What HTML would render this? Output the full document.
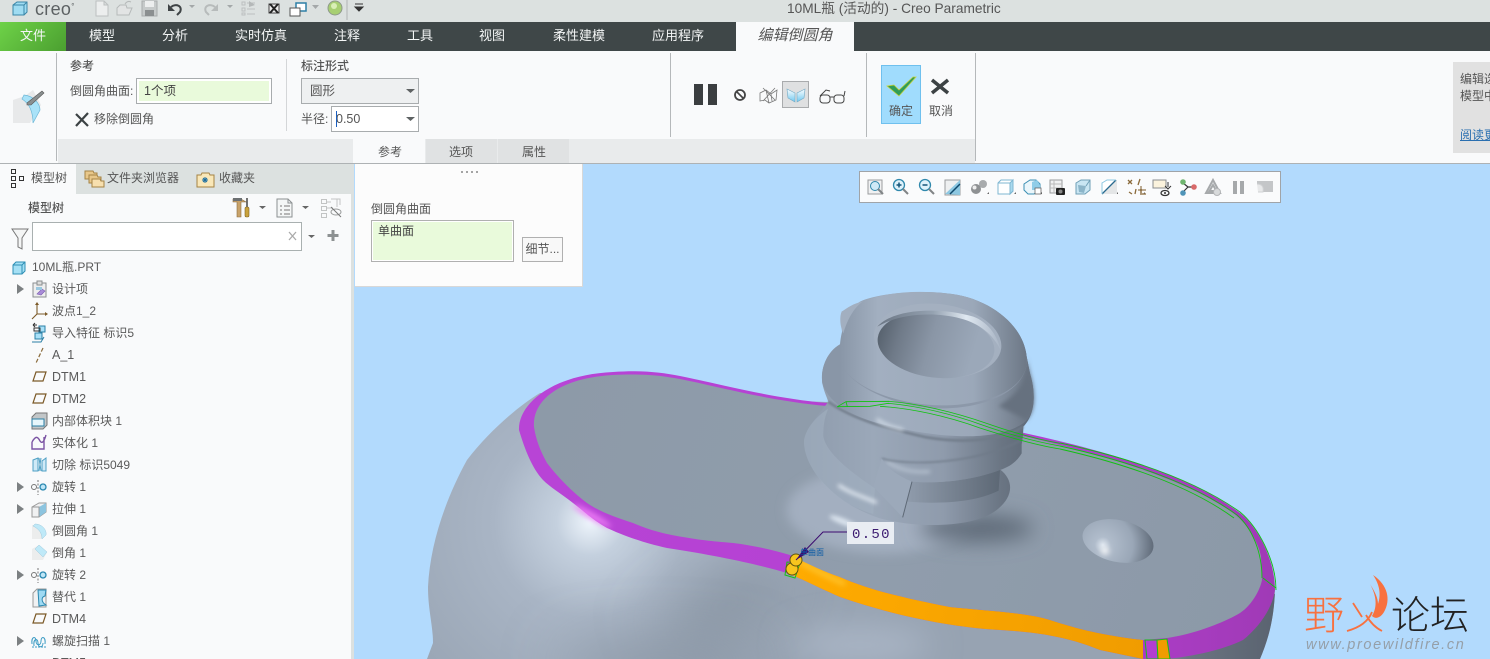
<!DOCTYPE html>
<html><head><meta charset="utf-8"><title>10ML瓶 (活动的) - Creo Parametric</title>
<style>
html,body{margin:0;padding:0;width:1490px;height:659px;overflow:hidden;background:#b2dafd}
body{position:relative;font-family:"Liberation Sans","Noto Sans CJK SC",sans-serif;font-size:12px;color:#555}
.a{position:absolute}
.t{position:absolute;white-space:nowrap;line-height:16px}
.tab{position:absolute;top:22px;height:29px;line-height:28px;color:#f4f6f6;font-size:13px;text-align:center;transform:translateX(-50%);white-space:nowrap}
.row{position:absolute;left:52px;white-space:nowrap;line-height:16px;font-size:12px;color:#5a5a5a;margin-top:1px}
.row.d{font-size:12.5px}
</style></head><body>

<!-- 3D viewport -->
<svg class="a" style="left:0;top:0" width="1490" height="659" viewBox="0 0 1490 659">
<defs>
<radialGradient id="bodyG" gradientUnits="userSpaceOnUse" cx="590" cy="522" r="240">
<stop offset="0" stop-color="#eef5fc"/><stop offset=".14" stop-color="#c4d0de"/><stop offset=".4" stop-color="#a9b5c5"/><stop offset="1" stop-color="#97a3b2"/>
</radialGradient>
<linearGradient id="rightDark" gradientUnits="userSpaceOnUse" x1="1130" y1="0" x2="1275" y2="0">
<stop offset="0" stop-color="#95a1b0"/><stop offset=".4" stop-color="#6a7481"/><stop offset="1" stop-color="#5a6370"/>
</linearGradient>
<linearGradient id="purp" gradientUnits="userSpaceOnUse" x1="520" y1="0" x2="1275" y2="0">
<stop offset="0" stop-color="#b844d6"/><stop offset=".7" stop-color="#b23fd0"/><stop offset="1" stop-color="#a03ab6"/>
</linearGradient>
<linearGradient id="or" gradientUnits="userSpaceOnUse" x1="800" y1="560" x2="1150" y2="650">
<stop offset="0" stop-color="#ffab00"/><stop offset="1" stop-color="#f09c00"/>
</linearGradient>
<linearGradient id="top" gradientUnits="userSpaceOnUse" x1="540" y1="400" x2="1250" y2="620">
<stop offset="0" stop-color="#8d9aa8"/><stop offset=".5" stop-color="#909dac"/><stop offset="1" stop-color="#8c99a8"/>
</linearGradient>
<linearGradient id="neck" gradientUnits="userSpaceOnUse" x1="130" y1="0" x2="830" y2="0">
<stop offset="0" stop-color="#8e9bac"/><stop offset=".3" stop-color="#9ba8b9"/><stop offset=".6" stop-color="#8f9bac"/><stop offset=".85" stop-color="#6a7583"/><stop offset="1" stop-color="#5c6775"/>
</linearGradient>
<linearGradient id="cap" gradientUnits="userSpaceOnUse" x1="240" y1="0" x2="810" y2="0">
<stop offset="0" stop-color="#8996a7"/><stop offset=".2" stop-color="#a2afc0"/><stop offset=".7" stop-color="#9ba8b9"/><stop offset="1" stop-color="#6a7583"/>
</linearGradient>
<linearGradient id="hole" gradientUnits="userSpaceOnUse" x1="350" y1="170" x2="640" y2="220">
<stop offset="0" stop-color="#56616d"/><stop offset=".22" stop-color="#6f7a88"/><stop offset=".55" stop-color="#8a96a6"/><stop offset="1" stop-color="#9ba8b9"/>
</linearGradient>
<linearGradient id="wall" gradientUnits="userSpaceOnUse" x1="352" y1="0" x2="722" y2="0">
<stop offset="0" stop-color="#6a7583"/><stop offset=".45" stop-color="#95a2b1"/><stop offset=".72" stop-color="#dfe8f1"/><stop offset="1" stop-color="#a8b4c4"/>
</linearGradient>
<linearGradient id="rec" gradientUnits="userSpaceOnUse" x1="450" y1="0" x2="730" y2="0">
<stop offset="0" stop-color="#8e9aaa"/><stop offset="1" stop-color="#5b6673"/>
</linearGradient>
<radialGradient id="bumpG" gradientUnits="userSpaceOnUse" cx="1104" cy="548" r="50">
<stop offset="0" stop-color="#dfe7f0"/><stop offset=".16" stop-color="#b0bccb"/><stop offset=".6" stop-color="#9aa7b7"/><stop offset="1" stop-color="#626d7b"/>
</radialGradient>
<filter id="b3" filterUnits="userSpaceOnUse" x="-2000" y="-2000" width="8000" height="8000"><feGaussianBlur stdDeviation="3"/></filter>
<filter id="b6" filterUnits="userSpaceOnUse" x="-2000" y="-2000" width="8000" height="8000"><feGaussianBlur stdDeviation="6"/></filter>
<filter id="b8" filterUnits="userSpaceOnUse" x="-2000" y="-2000" width="8000" height="8000"><feGaussianBlur stdDeviation="8"/></filter>
<filter id="b16" filterUnits="userSpaceOnUse" x="-2000" y="-2000" width="8000" height="8000"><feGaussianBlur stdDeviation="16"/></filter>
<filter id="b30" filterUnits="userSpaceOnUse" x="-2000" y="-2000" width="8000" height="8000"><feGaussianBlur stdDeviation="30"/></filter>
<clipPath id="bodyClip"><path d="M540,393 C520,405 490,430 467,460 C445,500 430,545 428,587 C428,610 433,625 433,643 L427,659 L1260,659 C1268,640 1274,620 1275,590 L1253,533 L827,402Z"/></clipPath>
</defs>
<rect width="1490" height="659" fill="#b2dafd"/>

<!-- body -->
<path d="M540,393 C520,405 490,430 467,460 C445,500 430,545 428,587 C428,610 433,625 433,643 L427,659 L1260,659 C1268,640 1274,620 1275,590 L1253,533 L827,402Z" fill="url(#bodyG)"/>
<g clip-path="url(#bodyClip)">
<ellipse cx="725" cy="605" rx="70" ry="22" fill="#808c9a" filter="url(#b30)" transform="rotate(-25 725 605)"/>
<ellipse cx="660" cy="665" rx="100" ry="18" fill="#828e9c" filter="url(#b30)"/>
<ellipse cx="860" cy="645" rx="70" ry="18" fill="#aab6c6" filter="url(#b16)"/>
<path d="M1130,630 L1290,590 L1290,659 L1130,659Z" fill="url(#rightDark)"/>
</g>

<!-- fillet outer: purple -->
<path d="M519,430 C518,405 550,375 613,372 C640,370 660,372 680,376 C720,384 770,398 827,403 L1000,428 C1100,448 1190,475 1240,513 C1258,527 1275,560 1275,590 C1272,610 1258,628 1243,640 C1222,650 1195,656 1167,659 L1143,659 L1100,650 C1075,640 1050,633 1000,630 C960,628 900,618 840,597 C815,586 800,578 787,573 C760,565 720,556 667,548 C640,542 620,534 607,528 C590,518 585,512 573,503 C560,493 550,487 543,480 C532,468 525,450 519,430Z" fill="url(#purp)"/>
<ellipse cx="592" cy="516" rx="22" ry="3" fill="#f080f8" filter="url(#b3)" transform="rotate(30 592 516)"/>
<!-- orange -->
<path d="M793,556 C810,565 825,572 840,577 C870,590 900,597 950,607 C990,611 1030,613 1050,620 C1075,628 1100,635 1143,640 L1143,659 L1100,650 C1075,640 1050,633 1000,630 C960,628 900,618 840,597 C815,586 800,578 787,573Z" fill="url(#or)"/>
<path d="M800,562 C815,570 830,578 845,584" stroke="#ffd040" stroke-width="3" fill="none" filter="url(#b3)"/>
<!-- flat top -->
<path d="M534,427 C532,400 560,378 613,375 C650,373 668,377 680,379 C720,387 770,401 827,406 L1000,431 C1090,450 1185,478 1233,513 C1250,525 1260,548 1261,557 L1262,580 C1260,590 1252,605 1240,613 C1225,622 1195,634 1167,638 L1143,640 C1100,635 1075,628 1050,620 C1030,613 990,611 950,607 C900,597 870,590 840,577 C825,572 810,565 790,555 C770,549 750,545 733,543 C710,541 700,540 683,537 C660,533 650,530 633,523 C615,517 600,512 587,503 C575,494 560,480 547,463 C540,450 536,440 534,427Z" fill="url(#top)"/>

<!-- band pieces -->
<path d="M1145,640 L1157,640 L1158,659 L1147,659Z" fill="#b23fd0" stroke="#16c016" stroke-width="1"/>
<path d="M1157,640 L1167,639 L1170,659 L1158,659Z" fill="#f09c00" stroke="#16c016" stroke-width="1"/>

<!-- bump -->
<ellipse cx="1118" cy="541" rx="36" ry="21" transform="rotate(12 1118 541)" fill="url(#bumpG)"/>
<ellipse cx="1105" cy="551" rx="4" ry="3.500" fill="#fff" filter="url(#b3)"/>

<!-- neck -->
<g transform="translate(760,280) scale(.33333)">
<ellipse cx="370" cy="690" rx="290" ry="130" fill="#a3afc0" filter="url(#b16)"/>
<ellipse cx="650" cy="745" rx="170" ry="40" fill="#5f6a78" filter="url(#b30)"/>
<ellipse cx="250" cy="725" rx="45" ry="9" fill="#dde6f0" filter="url(#b6)" transform="rotate(22 250 725)"/>
<!-- silhouette -->
<path d="M245,95 C240,120 250,160 245,190 C205,210 180,260 187,310 C192,335 200,350 205,365 C180,400 140,440 132,480 C128,560 220,670 360,715 C470,745 640,745 710,690 C762,650 762,600 720,568 C770,545 790,510 790,440 C830,400 825,330 810,280 L800,230 C790,130 680,50 560,40 C480,30 350,40 300,65 L270,85Z" fill="url(#neck)"/>
<!-- lighter collar -->
<path d="M132,480 C128,560 220,670 340,702 L345,625 C270,575 200,520 190,470 C190,430 195,410 205,385 C170,410 140,440 132,480Z" fill="#a3b0c1" opacity=".55"/>
<!-- recess -->
<path d="M456,605 C540,612 640,600 720,570 L716,632 C640,670 530,672 440,665Z" fill="url(#rec)"/>
<!-- upper thread -->
<path d="M365,535 C450,562 650,552 785,480 L785,520 C770,545 750,560 720,570 C640,600 540,612 456,605 C420,590 385,570 365,535Z" fill="url(#neck)"/>
<path d="M380,545 C420,570 460,578 510,575" stroke="#c8d3e0" stroke-width="6" fill="none" filter="url(#b6)"/>
<path d="M365,535 C450,560 650,550 785,480" stroke="#6d7886" stroke-width="4" fill="none" filter="url(#b3)"/>
<!-- tab -->
<path d="M365,535 L340,620 L428,712 L456,605 C420,590 385,570 365,535Z" fill="#9ca9ba"/>
<path d="M456,605 L428,712" stroke="#5e6976" stroke-width="3" fill="none"/>
<path d="M235,615 C270,640 310,650 350,668" stroke="#eef4fb" stroke-width="8" fill="none" filter="url(#b6)"/>
<!-- flange -->
<path d="M205,365 C280,420 400,450 500,472 C620,492 730,480 790,440" stroke="#6f7a88" stroke-width="7" fill="none" filter="url(#b3)"/>
<path d="M245,190 C205,210 180,260 187,310 C210,380 300,420 400,440 C520,470 700,490 790,430 C830,400 825,330 810,280 L800,230Z" fill="url(#cap)"/>
<path d="M350,418 C375,436 400,442 430,450" stroke="#e4edf6" stroke-width="7" fill="none" filter="url(#b6)"/>
<!-- barrel -->
<path d="M240,240 C260,320 420,390 560,385 C700,380 810,320 800,230 L240,200Z" fill="#8c98a9"/>
<path d="M800,230 C808,290 780,340 715,378 L800,420 C830,390 825,330 810,280Z" fill="#66717f" filter="url(#b6)"/>
<path d="M345,262 C370,285 400,298 440,310" stroke="#dfe8f2" stroke-width="9" fill="none" filter="url(#b6)"/>
<path d="M240,240 C235,180 250,110 290,75 C350,40 450,28 560,40 C680,50 790,130 800,230 C810,320 700,372 560,376 C420,380 260,320 240,240Z" fill="url(#cap)"/>
<!-- lip -->
<ellipse cx="533" cy="182" rx="192" ry="110" transform="rotate(7 533 182)" fill="#a4b0c0"/>
<ellipse cx="528" cy="195" rx="176" ry="98" transform="rotate(7 528 195)" fill="url(#hole)"/>
<path d="M352,140 C400,85 540,80 640,110 C680,125 710,160 722,210 C700,165 660,130 600,115 C520,95 420,100 352,140Z" fill="url(#wall)"/>
<!-- nub -->
<path d="M245,95 C262,84 280,70 308,65 C280,85 262,120 250,160 C240,140 238,110 245,95Z" fill="#a2afc0"/>
<!-- green lines -->
<g fill="none" stroke="#0fc40f" stroke-width="2.400">
<path d="M232,380 L258,365 L385,364 C470,370 580,395 680,430 C760,458 830,478 900,490"/>
<path d="M232,380 L330,379 L385,370 C470,378 570,400 670,436 C750,464 830,486 900,498"/>
<path d="M360,379 C450,384 560,408 660,444 C740,470 830,496 900,507"/>
<path d="M258,365 L262,380"/>
</g>
</g>
<!-- green rim right -->
<g fill="none" stroke="#12c012" stroke-width=".9">
<path d="M1060,443 C1130,458 1195,480 1240,512 C1258,527 1276,560 1276,590"/>
<path d="M1060,446 C1128,461 1193,483 1237,515 C1252,528 1262,552 1262,578"/>
<path d="M1060,449 C1126,464 1190,486 1234,518"/>
<path d="M1263,578 L1276,588"/>
</g>

<!-- handles -->
<path d="M787,562 L785,575 L795,578 L800,563Z" fill="none" stroke="#16c016"/>
<circle cx="792" cy="569" r="6" fill="#f7c51e" stroke="#62560f" stroke-width="1"/>
<circle cx="796" cy="560" r="6" fill="#f7c51e" stroke="#62560f" stroke-width="1"/>
<path d="M796,560 L823,532 L847,532" fill="none" stroke="#3c0b70" stroke-width="1"/>
<path d="M796,560 L805,547 L809,552Z" fill="#3c0b70"/>
<rect x="847" y="522" width="47" height="22" fill="#e9edf3"/>
<text x="852" y="538" font-family="Liberation Mono,monospace" font-size="14" letter-spacing="1.3" fill="#3c1b70">0.50</text>
<text x="800" y="555" font-family="Noto Sans CJK SC,sans-serif" font-size="8" fill="#0a5aa5">单曲面</text>

<!-- watermark -->
<text x="1304" y="629" font-family="Noto Sans CJK SC,sans-serif" font-size="40" font-weight="300" fill="#f8713f">野</text>
<path d="M1353,603 L1362,617 M1372,612 C1368,622 1358,628 1347,631 M1366,615 C1370,622 1376,628 1382,631" stroke="#f8713f" stroke-width="1.800" fill="none"/>
<path d="M1373,575 C1388,585 1391,600 1384,612 C1381,617 1376,620 1372,616 C1378,606 1376,595 1370,584 C1375,592 1378,598 1378,604 C1381,595 1380,585 1373,575Z" fill="#f8713f"/>
<text x="1391" y="629" font-family="Noto Sans CJK SC,sans-serif" font-size="39" font-weight="300" fill="#222">论坛</text>
<text x="1306" y="649" font-family="Liberation Sans,sans-serif" font-style="italic" font-size="14.500" letter-spacing="1.650" fill="#959fa8">www.proewildfire.cn</text>
</svg>

<!-- Title bar -->
<div class="a" style="left:0;top:0;width:1490px;height:22px;background:#dce1e0"></div>
<div class="t" style="left:35px;top:-2px;font-size:18px;letter-spacing:.3px;color:#5c6163;line-height:18px">creo<span style="font-size:8px;vertical-align:6px">°</span></div>
<div class="t" style="left:787px;top:1px;font-size:13.700px;color:#555">10ML瓶 (活动的) - Creo Parametric</div>

<!-- Tab bar -->
<div class="a" style="left:0;top:22px;width:1490px;height:29px;background:#3f4748"></div>
<div class="a" style="left:0;top:22px;width:66px;height:29px;background:linear-gradient(135deg,#6ed248,#4b9f30)"></div>
<div class="tab" style="left:33px">文件</div>
<div class="tab" style="left:102px">模型</div>
<div class="tab" style="left:175px">分析</div>
<div class="tab" style="left:261px">实时仿真</div>
<div class="tab" style="left:347px">注释</div>
<div class="tab" style="left:420px">工具</div>
<div class="tab" style="left:492px">视图</div>
<div class="tab" style="left:579px">柔性建模</div>
<div class="tab" style="left:678px">应用程序</div>
<div class="a" style="left:736px;top:22px;width:118px;height:29px;background:#f9fafb"></div>
<div class="tab" style="left:795px;color:#555;font-style:italic;font-size:15px">编辑倒圆角</div>

<!-- Ribbon -->
<div class="a" style="left:0;top:51px;width:1490px;height:112px;background:#f9fafb;border-bottom:1px solid #aeb2b4"></div>
<div class="a" style="left:58px;top:139px;width:917px;height:24px;background:#e9ebec"></div>
<div class="a" style="left:353px;top:139px;width:72px;height:24px;background:#f9fafb"></div>
<div class="a" style="left:426px;top:139px;width:71px;height:24px;background:#e0e2e3"></div>
<div class="a" style="left:498px;top:139px;width:71px;height:24px;background:#e0e2e3"></div>
<div class="t" style="left:378px;top:144px">参考</div>
<div class="t" style="left:449px;top:144px">选项</div>
<div class="t" style="left:522px;top:144px">属性</div>
<div class="a" style="left:56px;top:53px;width:1px;height:108px;background:#b5b8ba"></div>
<div class="a" style="left:286px;top:59px;width:1px;height:72px;background:#d4d6d8"></div>
<div class="a" style="left:670px;top:53px;width:1px;height:84px;background:#b5b8ba"></div>
<div class="a" style="left:866px;top:53px;width:1px;height:84px;background:#b5b8ba"></div>
<div class="a" style="left:975px;top:53px;width:1px;height:108px;background:#b5b8ba"></div>

<div class="t" style="left:70px;top:58px;font-weight:500">参考</div>
<div class="t" style="left:70px;top:83px">倒圆角曲面:</div>
<div class="a" style="left:136px;top:78px;width:136px;height:26px;box-sizing:border-box;border:1px solid #a8acae;background:#fff;padding:2px"><div style="background:#e9fadb;height:20px;line-height:20px;padding-left:5px;color:#444;font-size:12.500px">1个项</div></div>
<div class="t" style="left:94px;top:111px">移除倒圆角</div>
<div class="t" style="left:301px;top:58px;font-weight:500">标注形式</div>
<div class="a" style="left:301px;top:78px;width:118px;height:26px;box-sizing:border-box;border:1px solid #a8acae;background:#eef0f1;line-height:24px;padding-left:8px;font-size:12.500px">圆形</div>
<div class="t" style="left:301px;top:111px">半径:</div>
<div class="a" style="left:331px;top:106px;width:88px;height:26px;box-sizing:border-box;border:1px solid #a8acae;background:#fff;line-height:24px;padding-left:4px;font-size:12.500px">0.50</div>
<div class="a" style="left:336px;top:111px;width:1px;height:16px;background:#1a5fc0"></div>
<div class="a" style="left:782px;top:81px;width:27px;height:27px;box-sizing:border-box;background:#dfe0e1;border:1px solid #a9abad"></div>
<div class="a" style="left:881px;top:65px;width:40px;height:59px;box-sizing:border-box;background:#a0dcfd;border:1px solid #6fc0ee"></div>
<div class="t" style="left:889px;top:103px">确定</div>
<div class="t" style="left:929px;top:103px">取消</div>

<div class="a" style="left:1453px;top:62px;width:37px;height:91px;background:#e1e1e1"></div>
<div class="t" style="left:1460px;top:71px;width:30px;overflow:hidden">编辑选</div>
<div class="t" style="left:1460px;top:88px;width:30px;overflow:hidden">模型中</div>
<div class="t" style="left:1460px;top:127px;width:30px;overflow:hidden;color:#2a6fb0;text-decoration:underline">阅读更</div>

<!-- Left panel -->
<div class="a" style="left:0;top:164px;width:351px;height:495px;background:#f9fafb"></div>
<div class="a" style="left:351px;top:164px;width:3px;height:495px;background:#dce1e0"></div>
<div class="a" style="left:76px;top:164px;width:275px;height:30px;background:#dce1e0"></div>
<div class="t" style="left:31px;top:170px">模型树</div>
<div class="t" style="left:107px;top:170px">文件夹浏览器</div>
<div class="t" style="left:219px;top:170px">收藏夹</div>
<div class="t" style="left:28px;top:200px;font-weight:500">模型树</div>
<div class="a" style="left:32px;top:222px;width:270px;height:29px;box-sizing:border-box;border:1px solid #a9b0b0;background:#fff"></div>
<div class="row" style="left:32px;top:258px">10ML瓶.PRT</div>
<div class="row" style="top:280px">设计项</div>
<div class="row" style="top:302px">波点1_2</div>
<div class="row" style="top:324px">导入特征 标识5</div>
<div class="row d" style="top:346px">A_1</div>
<div class="row d" style="top:368px">DTM1</div>
<div class="row d" style="top:390px">DTM2</div>
<div class="row" style="top:412px">内部体积块 1</div>
<div class="row" style="top:434px">实体化 1</div>
<div class="row" style="top:456px">切除 标识5049</div>
<div class="row" style="top:478px">旋转 1</div>
<div class="row" style="top:500px">拉伸 1</div>
<div class="row" style="top:522px">倒圆角 1</div>
<div class="row" style="top:544px">倒角 1</div>
<div class="row" style="top:566px">旋转 2</div>
<div class="row" style="top:588px">替代 1</div>
<div class="row d" style="top:610px">DTM4</div>
<div class="row" style="top:632px">螺旋扫描 1</div>
<div class="row d" style="top:654px">DTM5</div>

<!-- Popup -->
<div class="a" style="left:355px;top:164px;width:227px;height:122px;background:#fcfcfc;border-right:1px solid #d8d8d8;border-bottom:1px solid #d8d8d8"></div>
<div class="t" style="left:371px;top:201px">倒圆角曲面</div>
<div class="a" style="left:371px;top:220px;width:143px;height:42px;box-sizing:border-box;background:#e9fadb;border:1px solid #b0b0b0;box-shadow:inset 0 0 0 1px #fff;padding:2px 6px;line-height:17px;color:#444">单曲面</div>
<div class="a" style="left:522px;top:237px;width:41px;height:25px;box-sizing:border-box;background:#f8f8f8;border:1px solid #b0b0b0;line-height:23px;text-align:center;white-space:nowrap;overflow:hidden">细节...</div>

<!-- View toolbar -->
<div class="a" style="left:859px;top:171px;width:422px;height:32px;box-sizing:border-box;background:#fafbfc;border:1px solid #a0a4a8"></div>

<!-- Icons overlay -->
<svg class="a" style="left:0;top:0" width="1490" height="659" viewBox="0 0 1490 659" fill="none">
<defs><linearGradient id="mir2" x1="0" y1="0" x2="0" y2="1"><stop offset="0" stop-color="#ffffff"/><stop offset="1" stop-color="#6fc8f0"/></linearGradient></defs>
<!-- top logo cube -->
<path d="M13,5 L17,2 L27,2 L27,12 L24,15 L13,15Z" fill="#9fdcf2" stroke="#3a86a8"/><path d="M13,5 L24,5 L24,15 M24,5 L27,2" stroke="#3a86a8"/>
<!-- new/open/save -->
<path d="M96,1 L104,1 L108,5 L108,16 L96,16Z M104,1 L104,5 L108,5" fill="#eceeee" stroke="#bcc0c0"/>
<path d="M117,8 L120,5 L126,5 L127,8 L132,8 L129,15 L117,15Z" fill="#e2e4e4" stroke="#b6baba"/><path d="M125,4 C127,1 129,1 131,2" stroke="#b6baba"/>
<rect x="142" y="1" width="15" height="15" fill="#c6caca" stroke="#a8acac"/><rect x="145" y="1" width="9" height="6" fill="#eceeee"/><rect x="145" y="10" width="9" height="6" fill="#8b8f90"/>
<!-- undo/redo -->
<path d="M168,4 L168,11 L175,11 Z" fill="#3f4446"/><path d="M171,7 C176,3 183,6 180,12 L177,15" stroke="#3f4446" stroke-width="2"/>
<path d="M189,5 L195,5 L192,8Z M227,5 L233,5 L230,8Z M312,5 L319,5 L315.500,9Z" fill="#a4a8a9"/>
<path d="M218,4 L218,11 L211,11 Z" fill="#b7bbbb"/><path d="M215,7 C210,3 203,6 206,12 L209,15" stroke="#b7bbbb" stroke-width="2"/>
<path d="M242,2 h3 v3 h-3z M242,8 h3 v3 h-3z M242,13 h3 v2 h-3z M247,3 h8 M247,9 h8 M247,14 h8" stroke="#bcc0c0"/><path d="M249,1 L255,5 L249,7Z" fill="#b4b8b8"/>
<path d="M269,4 H279 V13 H269Z" stroke="#444" fill="#eee"/><path d="M270,4 L278,13 M278,4 L270,13" stroke="#222" stroke-width="2"/>
<rect x="296" y="3" width="10" height="8" fill="#fff" stroke="#2d7fa6" stroke-width="1.500"/><rect x="290" y="8" width="10" height="8" fill="#fff" stroke="#555" stroke-width="1"/>
<circle cx="335" cy="8" r="7" fill="#a7cf72" stroke="#8e9a8a"/><circle cx="334" cy="6" r="3" fill="#d9efb6"/>
<path d="M347,0 V20" stroke="#b0b4b4"/>
<path d="M355,4 H363 M355,7 H363 L359,11Z" stroke="#333" fill="#333"/>

<!-- ribbon fillet icon -->
<path d="M13,105 L13,100 L25,96 L33,90 L41,105 L30,123 L13,123Z" fill="#e8e9ea"/>
<path d="M24,95 C34,96 40,104 40,110 L33,123 C33,113 30,104 22,99Z" fill="#a9e2f8" stroke="#6db7d6" stroke-width=".7"/>
<path d="M27,103 L42,91 L44,93 L31,105 L27,105Z" fill="#8a8f90" stroke="#555" stroke-width=".6"/>
<path d="M76,114 L88,126 M88,113 L76,126" stroke="#3c4244" stroke-width="2.200"/>
<path d="M406,89 H415 L410.500,93Z M406,117 H415 L410.500,121Z" fill="#5e6263"/>
<!-- pause etc -->
<rect x="694" y="84" width="9" height="21" fill="#3b3e40"/><rect x="708" y="84" width="9" height="21" fill="#3b3e40"/>
<circle cx="740" cy="95" r="5" stroke="#444" stroke-width="1.800"/><path d="M736.500,91.500 L743.500,98.500" stroke="#444" stroke-width="1.600"/>
<path d="M760,93 L766,90 L771,94 L777,90 L776,100 L769,103 L765,100 L760,101Z M766,90 L769,103 M771,94 L772,101 M763,88 L775,100 M775,88 L763,101" stroke="#777" stroke-width=".8"/>
<path d="M787,89 L795,93 L795,102 L788,98Z M797,93 L805,89 L804,98 L797,102Z" fill="url(#mir2)" stroke="#6fa8c4" stroke-width=".6"/>
<rect x="820" y="95" width="10" height="8" rx="3" stroke="#444" stroke-width="1"/><rect x="834" y="95" width="10" height="8" rx="3" stroke="#444" stroke-width="1"/><path d="M830,97 H834 M820,96 L826,90 L830,91 M844,96 L845,91" stroke="#444"/>
<!-- check / cancel -->
<path d="M887,86 L894,85 L899,90 L913,77 L916,77 L899,96Z" fill="#2f9c59" stroke="#c8d23a" stroke-width=".8"/>
<path d="M932,80 L948,93 M948,80 L932,93" stroke="#3c4244" stroke-width="3.500"/>
<!-- popup dots -->
<path d="M461,172 h2 M466,172 h2 M471,172 h2 M476,172 h2" stroke="#a4a4a4" stroke-width="2"/>
<!-- left tabs -->
<rect x="11.500" y="169.500" width="4" height="4" stroke="#333"/><rect x="11.500" y="176.500" width="4" height="4" stroke="#333"/><rect x="11.500" y="183.500" width="4" height="4" stroke="#333"/><rect x="19.500" y="176.500" width="4" height="4" stroke="#333"/>
<g fill="#e8c78a" stroke="#a58345"><path d="M85,171 h8 l1,2 h3 v6 h-12Z"/><path d="M89,175 h8 l1,2 h3 v6 h-12Z"/><path d="M92,179 h8 l1,2 h3 v6 h-12Z" fill="#f7dfae"/></g>
<path d="M197,175 h4 l1,-2 h7 l1,2 h4 v12 h-17Z" fill="#f9e7b8" stroke="#a58345"/><path d="M205,177 v6 M202,180 h6 M203,178 l4,4 M207,178 l-4,4" stroke="#1c6da0"/>
<!-- tree toolbar -->
<path d="M233,199 H241 L246,202 H241 V217 H237 V202 H233Z" fill="#c9a36a" stroke="#8b6d3f" stroke-width=".6"/><rect x="233" y="198" width="9" height="3" fill="#6c7072"/>
<path d="M247,198 V207" stroke="#444" stroke-width="1.500"/><rect x="245" y="207" width="4" height="10" rx="1.500" fill="#c9a23c" stroke="#806321" stroke-width=".6"/>
<path d="M259,206 H266 L262.500,209Z M302,206 H309 L305.500,209Z M308,235 H315 L311.500,238Z" fill="#666"/>
<path d="M277,199 H288 L292,203 V217 H277Z M288,199 V203 H292" fill="#f4f6f6" stroke="#8c9092"/><path d="M280,206 h2 M284,206 h6 M280,210 h2 M284,210 h6 M280,214 h2 M284,214 h6" stroke="#777"/>
<g stroke="#c2c4c4"><rect x="321.500" y="199.500" width="5" height="4"/><rect x="321.500" y="206.500" width="5" height="4"/><rect x="321.500" y="213.500" width="5" height="4"/><path d="M327,202 h4 M327,208 h6 M331,199 h6 v8 M334,199 h6 v6"/></g>
<ellipse cx="336" cy="212" rx="5" ry="3" stroke="#9a9c9c"/><path d="M331,207 L341,217" stroke="#777"/>
<!-- filter -->
<path d="M12,229 H28 L22,238 V249 L18,247 V238Z" stroke="#777" fill="#f4f5f5"/>
<path d="M289,232 L296,240 M296,232 L289,240" stroke="#aaa" stroke-width="1.300"/>
<path d="M333,230 V241 M327.500,235.500 H338.500" stroke="#8d9192" stroke-width="3"/>
<!-- tree icons -->
<path d="M13,265 L16,262 L25,262 L25,271 L22,274 L13,274Z" fill="#a5e0f5" stroke="#2e8fb5"/><path d="M13,265 L22,265 L22,274 M22,265 L25,262" stroke="#2e8fb5"/>
<g fill="#7c8082"><path d="M17,284 L24,289 L17,294Z"/><path d="M17,482 L24,487 L17,492Z"/><path d="M17,504 L24,509 L17,514Z"/><path d="M17,570 L24,575 L17,580Z"/><path d="M17,636 L24,641 L17,646Z"/></g>
<rect x="33" y="283" width="13" height="14" fill="#eee" stroke="#8a8e90"/><rect x="37" y="281" width="5" height="4" fill="#ddd" stroke="#8a8e90"/><path d="M37,294 L42,289 L45,291 L41,295Z" fill="#a98cd8" stroke="#7a5ab0" stroke-width=".6"/><rect x="36" y="287" width="6" height="3" fill="#9ac8e0"/>
<path d="M37,303 V314 H47 M37,314 L32,319" stroke="#7c5a28" stroke-width="1.100"/><path d="M35,305 L37,302 L39,305Z M45,312 L48,314 L45,316Z" fill="#7c5a28"/>
<rect x="39" y="326" width="6" height="6" fill="#a8e0f8" stroke="#2a7fa5"/><rect x="34" y="328" width="6" height="3" stroke="#333"/><rect x="35" y="333" width="7" height="6" fill="#a8e0f8" stroke="#2a7fa5"/><path d="M32,342 H41 L44,337" stroke="#2a7fa5"/><path d="M33,325 L37,325 M33,325 L35,323 M33,325 L35,327" stroke="#333"/>
<path d="M43,348 L36,363" stroke="#8a6a3a" stroke-width="1.200" stroke-dasharray="4 2"/>
<g stroke="#7c5a28" stroke-width="1.200"><path d="M36,372 H46 L43,381 H33Z"/><path d="M36,394 H46 L43,403 H33Z"/><path d="M36,614 H46 L43,623 H33Z"/></g>
<path d="M32,417 L36,413 H47 V425 L43,429 H32Z" fill="#c2c6c8" stroke="#777"/><rect x="32" y="419" width="12" height="7" fill="#e8f6fb" stroke="#2a7fa5"/>
<path d="M32,442 V449 H44 V437 M32,442 C36,435 38,437 40,441 C42,444 44,442 46,435" stroke="#7c55a4" stroke-width="1.400"/>
<path d="M33,460 L38,458 L38,471 L33,471Z M46,458 L42,461 V471 H46Z" fill="#cfeaf7" stroke="#4fa0c4"/><path d="M39,458 L41,471 M41,458 L39,471" stroke="#4fa0c4"/>
<g stroke-width="1"><path d="M38,480 V495" stroke="#777" stroke-dasharray="2 1.500"/><circle cx="34" cy="487" r="2.500" stroke="#777"/><circle cx="43" cy="487" r="3" fill="#bfe6f7" stroke="#2a88b0" stroke-width="1.300"/></g>
<g stroke-width="1"><path d="M38,568 V583" stroke="#777" stroke-dasharray="2 1.500"/><circle cx="34" cy="575" r="2.500" stroke="#777"/><circle cx="43" cy="575" r="3" fill="#bfe6f7" stroke="#2a88b0" stroke-width="1.300"/></g>
<path d="M32,507 L39,503 H46 V512 L39,517 H32Z" fill="#f0f1f2" stroke="#999"/><path d="M39,507 L46,503 V512 L39,517Z" fill="#8cc4df"/><path d="M32,507 H39 V517" stroke="#999"/>
<path d="M32,525 L38,525 C43,526 46,531 46,535 L41,539 H32Z" fill="#eceded"/><path d="M35,524 C42,524 47,530 46,535 L42,539 C42,533 39,529 33,526Z" fill="#bfe9f8" stroke="#9cc9dd" stroke-width=".5"/>
<path d="M32,549 L39,545 L47,552 L43,560 H32Z" fill="#eceded"/><path d="M39,545 L47,552 L43,557 L35,549Z" fill="#bfe9f8" stroke="#9cc9dd" stroke-width=".5"/>
<path d="M33,593 L37,589 H46 V607 H33Z" fill="#f0f1f2" stroke="#999"/><path d="M38,590 H46 L45,596 C41,597 41,602 46,605 L39,606Z" fill="#9fdaf3" stroke="#2a88b0"/>
<g stroke="#3d9cc4" stroke-width="1"><path d="M32,644 C31,636 36,636 36,641 C36,646 41,646 41,641 C41,636 46,636 45,644"/><path d="M34,646 C33,638 38,638 38,643 C38,648 43,648 43,643"/><path d="M32,647 H46" stroke-dasharray="2 1"/></g>
<!-- view toolbar icons -->
<rect x="868" y="180" width="14" height="14" fill="#f0f1f2" stroke="#9a9c9e"/><circle cx="875" cy="186" r="4.500" fill="#cfeaf7" stroke="#2f88ac"/><path d="M878,189 L883,194" stroke="#808486" stroke-width="2"/>
<circle cx="899" cy="185" r="5.500" fill="#dff2fb" stroke="#2f88ac" stroke-width="1.300"/><path d="M896.500,185 H901.500 M899,182.500 V187.500" stroke="#14557a" stroke-width="1.500"/><path d="M903,189 L908,194" stroke="#808486" stroke-width="2"/>
<circle cx="925" cy="185" r="5.500" fill="#dff2fb" stroke="#2f88ac" stroke-width="1.300"/><path d="M922.500,185 H927.500" stroke="#14557a" stroke-width="1.500"/><path d="M929,189 L934,194" stroke="#808486" stroke-width="2"/>
<rect x="945" y="180" width="15" height="15" fill="#eef0f1" stroke="#9a9c9e"/><path d="M945,194 L960,180 V195Z" fill="#8dc8e2"/><path d="M950,194 L960,184" stroke="#0f4a6e" stroke-width="1.500"/>
<circle cx="983" cy="184" r="4" fill="#a8abad"/><circle cx="976" cy="189" r="5" fill="#8e9193"/><circle cx="974.500" cy="187.500" r="2" fill="#eee"/><path d="M987,194 h2 v-2Z M1014,194 h2 v-2Z M1040,194 h2 v-2Z M1116,194 h2 v-2Z M1143,194 h2 v-2Z" fill="#666"/>
<path d="M998,183 L1001,180 H1013 V191 L1010,194 H998Z" fill="#fff" stroke="#7fb7d2"/><path d="M1010,183 L1013,180 V191 L1010,194Z" fill="#a8d9ee" stroke="#7fb7d2"/><path d="M998,183 H1010 V194" stroke="#7fb7d2"/>
<path d="M1024,184 L1030,180 H1036 L1040,184 V190 L1034,194 H1028 L1024,190Z" fill="#eaf6fb" stroke="#3b8fb3"/><path d="M1032,182 L1037,180 L1040,185 V190 H1032Z" fill="#8fcde8"/><rect x="1035" y="188" width="6" height="6" fill="#fff" stroke="#555" stroke-width=".7"/>
<rect x="1050" y="180" width="12" height="13" fill="#f0f1f2" stroke="#9a9c9e"/><path d="M1050,184 h12 M1050,188 h12 M1054,180 v13" stroke="#bbb"/><rect x="1056" y="188" width="9" height="7" rx="1" fill="#222"/><circle cx="1060.500" cy="191.500" r="2" fill="#888"/>
<path d="M1076,183 L1081,180 H1090 V190 L1085,194 H1076Z" fill="#c9e6f3" stroke="#6f9fb6"/><path d="M1078,185 L1086,186 L1084,193 L1079,192Z" fill="#8cb5c9"/><path d="M1086,186 L1090,180" stroke="#6f9fb6"/>
<path d="M1102,180 H1117 V194 H1102Z" fill="#fff"/><path d="M1117,180 V194 H1103Z" fill="#e4e6e7"/><path d="M1102,194 L1116,180" stroke="#2a6a8e" stroke-width="1.300"/><path d="M1102,194 V183 L1107,180 H1116" stroke="#8dc8e2"/>
<path d="M1128,180 l4,4 M1132,180 l-4,4 M1140,179 l-2,6 M1136,189 l-1,5 M1142,194 H1146 M1141,189 v6 M1129,192 l3,2" stroke="#8a6a3a" stroke-width="1.300"/><path d="M1138,190 H1146 M1141,186 V194" stroke="#7c5a28"/>
<rect x="1153" y="180" width="13" height="8" fill="#fbf3dd" stroke="#8a8e90"/><path d="M1168,182 V187 M1165,186 L1168,189 L1171,186" stroke="#333"/><ellipse cx="1165" cy="193" rx="4" ry="2.500" stroke="#333" stroke-width="1.300"/><circle cx="1165" cy="193" r="1" fill="#333"/>
<path d="M1183,183 L1188,187 L1194,187 M1188,187 L1183,192" stroke="#333" stroke-width="1.200"/><circle cx="1183" cy="182" r="2.800" fill="#6fb56f"/><circle cx="1194" cy="187" r="2.800" fill="#d86a6a"/><circle cx="1183" cy="193" r="2.800" fill="#4f94b8"/>
<path d="M1213,180 L1220,193 H1206Z M1213,185 L1216.500,191 H1209.500Z" stroke="#a6a9ab" stroke-width="2"/><circle cx="1217" cy="192" r="3.500" fill="#d8dadb" stroke="#b4b6b8"/>
<rect x="1233" y="181" width="4" height="13" fill="#a6a9ab"/><rect x="1240" y="181" width="4" height="13" fill="#a6a9ab"/>
<path d="M1257,181 H1273 V192 H1263 C1264,187 1262,184 1257,184Z" fill="#c4c6c8"/><path d="M1257,184 C1262,184 1264,187 1263,192 H1258" fill="#e8e9ea" stroke="#d0d2d4"/>
</svg>
</body></html>
